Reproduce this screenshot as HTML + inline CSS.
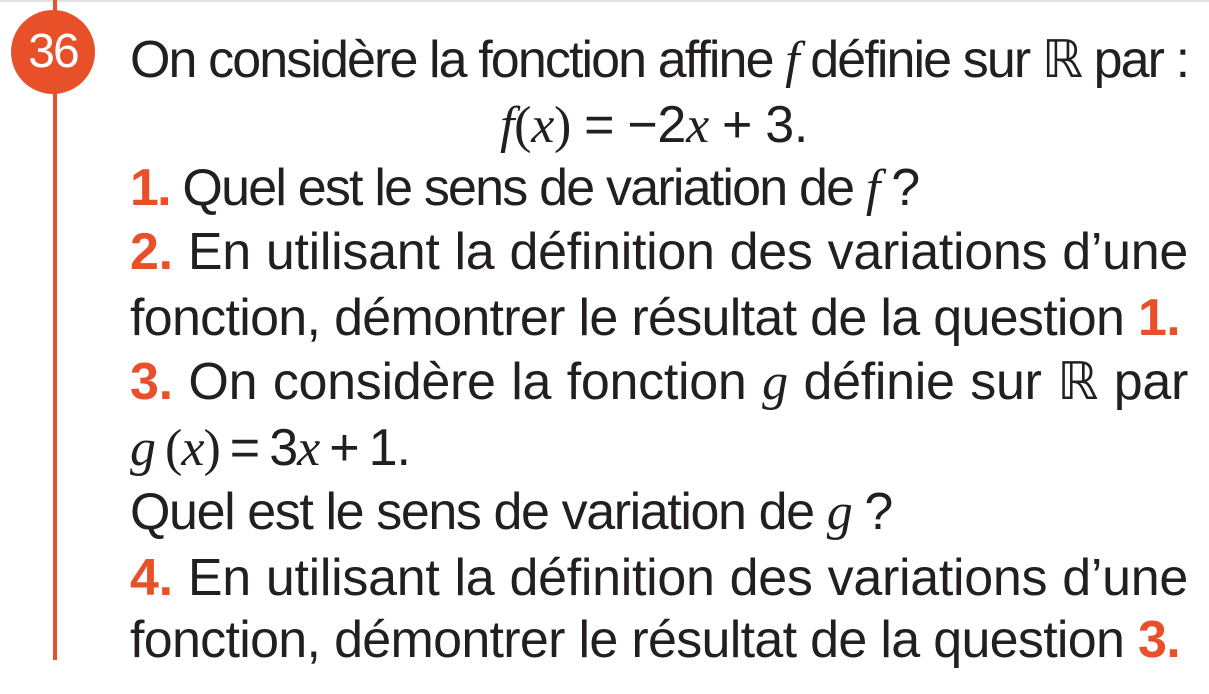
<!DOCTYPE html>
<html><head><meta charset="utf-8"><style>
html,body{margin:0;padding:0;background:#fff;}
body{width:1209px;height:694px;position:relative;overflow:hidden;font-family:"Liberation Sans",sans-serif;color:#231f20;}
.top{position:absolute;left:0;top:0;width:1209px;height:2px;background:#e2e2e2;}
.vl{position:absolute;left:53px;top:0;width:4px;height:660px;background:#e8502a;}
.c{position:absolute;left:11px;top:10px;width:84px;height:84px;border-radius:50%;background:#e8502a;color:#fff;font-size:48px;line-height:84px;text-align:center;letter-spacing:-2px;}
.l{position:absolute;left:130px;height:60px;line-height:60px;font-size:52px;white-space:nowrap;text-align:justify;text-align-last:justify;letter-spacing:-0.3px;}
.o{color:#e8502a;font-weight:bold;}
.m{font-family:"Liberation Serif",serif;font-style:italic;}
.s{font-family:"Liberation Serif",serif;}
</style></head><body>
<div class="top"></div>
<div class="vl"></div>
<div class="c">36</div>
<div class="l" style="top:30px;width:1058px;letter-spacing:-1.9px">On considère la fonction affine <span class="m">f</span> définie sur ℝ par :</div>
<div class="l" style="top:95px;left:500px;width:308px;letter-spacing:-0.3px;word-spacing:-2px"><span class="m">f</span><span class="s">(</span><span class="m">x</span><span class="s">)</span> = −2<span class="m">x</span> + 3.</div>
<div class="l" style="top:158px;width:788px;letter-spacing:-1.8px"><span class="o">1.</span> Quel est le sens de variation de <span class="m">f</span> ?</div>
<div class="l" style="top:222px;width:1058px"><span class="o">2.</span> En utilisant la définition des variations d’une</div>
<div class="l" style="top:288px;width:1050px;letter-spacing:-0.7px">fonction, démontrer le résultat de la question <span class="o">1.</span></div>
<div class="l" style="top:352px;width:1058px"><span class="o">3.</span> On considère la fonction <span class="m">g</span> définie sur ℝ par</div>
<div class="l" style="top:418px;width:280px;letter-spacing:-1px;word-spacing:-5px"><span class="m">g</span> <span class="s">(</span><span class="m">x</span><span class="s">)</span> = 3<span class="m">x</span> + 1.</div>
<div class="l" style="top:482px;width:760px;letter-spacing:-1.4px">Quel est le sens de variation de <span class="m">g</span> ?</div>
<div class="l" style="top:548px;width:1058px"><span class="o">4.</span> En utilisant la définition des variations d’une</div>
<div class="l" style="top:610px;width:1050px;letter-spacing:-0.7px">fonction, démontrer le résultat de la question <span class="o">3.</span></div>
</body></html>
